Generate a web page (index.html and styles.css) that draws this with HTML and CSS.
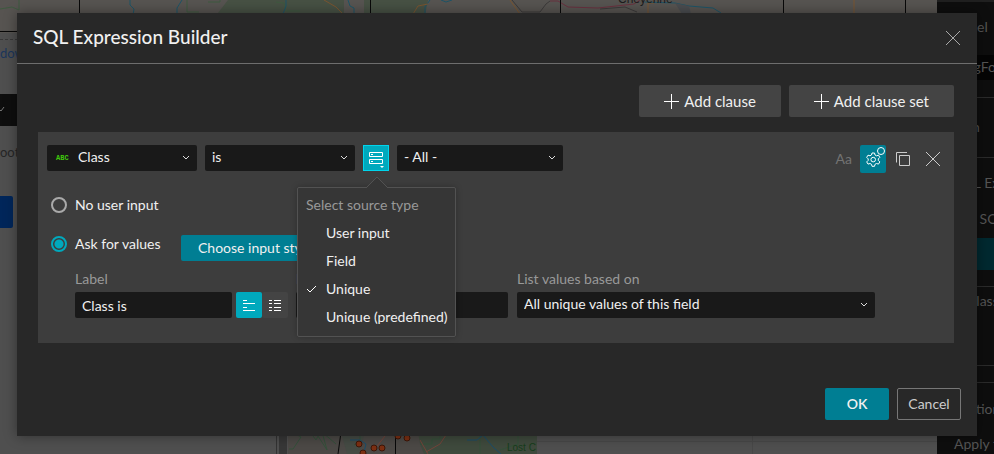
FILE: index.html
```html
<!DOCTYPE html>
<html lang="en">
<head>
    <meta charset="UTF-8">
    <meta name="viewport" content="width=device-width, initial-scale=1.0">
    <title>SQL Expression Builder</title>
    <link rel="stylesheet" href="styles.css">
</head>
<body>
    <div class="app" aria-hidden="true">
        <div class="app-main">
            <svg class="map-top" viewBox="0 0 937 40" preserveAspectRatio="xMinYMin slice">
                <rect width="937" height="40" fill="#575451"/>
                <path d="M218 13 L228 0 H344 V13 Z" fill="#475144"/>
                <path d="M300 0 h12 v10 h14 v6 h-26z M364 0 h64 l-3 16 h-61z" fill="#475144"/>
                <path d="M0 9 L12 7 L19 10 V0 M187 0 v12 h12 M208 2 h12 v-2 M276 2 l8 1 l2 8 h14" fill="none" stroke="#3f5a40" stroke-width="1"/>
                <path d="M130 0 v5 l4 4 l-1 6 M182 0 l-5 8 v6 M286 0 v6 l-3 8 M348 0 l2 6 l4 2 v8 M430 0 l-5 7 v8 M441 0 l5 2 l6 -2" fill="none" stroke="#1d5468" stroke-width="1"/>
                <path d="M324 0 l12 7 l8 8 M413 14 l5 -8 l10 -2 M510 0 l10 14 M648 14 V3 h6 V0 M854 0 v14" fill="none" stroke="#7a5530" stroke-width="1"/>
                <path d="M512 0 l10 12 h18 l6 -8 l4 -3 M600 9 l25 -2 l12 5" fill="none" stroke="#3c3a3a" stroke-width="1"/>
                <path d="M550 1 h8 l10 6 l30 1 l36 -4 l6 -4" fill="none" stroke="#69313f" stroke-width="1"/>
                <path d="M645 2 l30 1 l14 3 l24 2 l8 5" fill="none" stroke="#1d5468" stroke-width="1"/>
                <path d="M675 3 l14 3 l2 8 h-9z" fill="#4b4d50"/>
                <path d="M79.500 0 V40 M370.500 0 V14 M560.500 0 V14 M783.500 0 V14 M905.500 0 V14 M0 31.500 H40" stroke="#080808" stroke-width="1"/>
                <path d="M0 33 H40 V40 H0z" fill="#4f4f4f"/>
                <path d="M0 39.500 H40" stroke="#383838" stroke-dasharray="3 2"/>
                <text x="618" y="3" class="place">Cheyenne</text>
            </svg>
            <div class="side-form">
                <a href="#" class="side-link">dow</a>
                <div class="side-bar">
                    <svg width="10" height="8" viewBox="0 0 10 8"><path d="M0 4 l1 1 l3 -4" fill="none" stroke="#777"/></svg>
                </div>
                <span class="side-text">oot</span>
                <div class="side-button"></div>
            </div>
            <svg class="map-bottom" viewBox="0 0 937 22" preserveAspectRatio="xMinYMin slice">
                <rect width="937" height="22" fill="#4f4f4f"/>
                <rect x="279" width="8" height="22" fill="#373737"/>
                <path d="M276.500 0 V22" stroke="#333"/>
                <rect x="288" width="249" height="22" fill="#4c4946"/>
                <path d="M418 0 H537 V22 H424 L420 12 Z" fill="#3f4a3d"/>
                <path d="M341 0 h24 l-6 22 h-12z" fill="#454b44"/>
                <path d="M289 17 h4 l8 -12 l-4 -2 M310 0 l6 8 l2 -4 l9 14 l-5 -18 l14 12 M360 0 v9 l-6 4 M420 12 h12 v-5 h8 v-7 M480 0 V22 M500 18 l18 -6 l0 -12" fill="none" stroke="#34503a"/>
                <path d="M385 4 l-8 10 M448 0 l-8 12 l-14 8 M420 8 l8 14" fill="none" stroke="#74443a"/>
                <path d="M350 8 h10 l6 4 l-2 8 M467 8 h10 l6 -5 l10 12 l8 7" fill="none" stroke="#1b4d6a"/>
                <path d="M341 0 L338 22 M395.500 0 V22" stroke="#080808"/>
                <path d="M537 9.500 H937 M752.500 0 V22" stroke="#484848"/>
                <g fill="#7c2f12" stroke="#3d1608" stroke-width="1">
                    <circle cx="359" cy="12" r="3"/>
                    <circle cx="374" cy="16" r="3"/>
                    <circle cx="382" cy="16" r="3"/>
                    <circle cx="398" cy="4" r="3"/>
                    <circle cx="407" cy="6" r="3"/>
                    <circle cx="363" cy="21" r="3"/>
                </g>
                <text x="507" y="19" class="park">Lost C</text>
            </svg>
        </div>
        <div class="app-panel">
            <div class="panel-group">Label</div>
            <div class="panel-field">StringFo</div>
            <div class="panel-group panel-mid">Join</div>
            <div class="panel-group panel-sql">SQL Ex</div>
            <div class="panel-group panel-sub">Add SQ</div>
            <div class="panel-accent"></div>
            <div class="panel-group panel-class">Class</div>
            <div class="panel-gap"></div>
            <div class="panel-group panel-action">Action</div>
            <div class="panel-apply">Apply f</div>
        </div>
    </div>

    <form class="dialog" role="dialog" aria-labelledby="dialog-title">
        <header class="dialog-header">
            <h1 id="dialog-title">SQL Expression Builder</h1>
            <button type="button" class="icon-button" aria-label="Close">
                <svg width="14" height="14" viewBox="0 0 14 14"><path d="M0 0 L14 14 M14 0 L0 14" stroke="#a9a9a9"/></svg>
            </button>
        </header>

        <div class="dialog-body">
            <div class="toolbar">
                <button type="button" class="add-button">
                    <svg width="15" height="15" viewBox="0 0 15 15"><path d="M7.500 0 V15 M0 7.500 H15" stroke="#fff"/></svg>
                    Add clause
                </button>
                <button type="button" class="add-button">
                    <svg width="15" height="15" viewBox="0 0 15 15"><path d="M7.500 0 V15 M0 7.500 H15" stroke="#fff"/></svg>
                    Add clause set
                </button>
            </div>

            <section class="clause">
                <div class="clause-row">
                    <div class="select field-select">
                        <span class="field-type">ABC</span>
                        <select aria-label="Field"><option>Class</option></select>
                        <svg class="chevron" width="8" height="6" viewBox="0 0 8 6"><path d="M1 1 L4 4 L7 1"/></svg>
                    </div>
                    <div class="select operator-select">
                        <select aria-label="Operator"><option>is</option></select>
                        <svg class="chevron" width="8" height="6" viewBox="0 0 8 6"><path d="M1 1 L4 4 L7 1"/></svg>
                    </div>
                    <div class="source">
                        <button type="button" class="source-button" aria-label="Select source type">
                            <svg width="24" height="24" viewBox="0 0 24 24">
                                <path d="M5.500 6.500 h13 v4 h-13z M5.500 13.500 h13 v4 h-13z M7 8.500 h2 M7 15.500 h2" fill="none" stroke="#fff"/>
                                <path d="M16 20 h4 l-2 2z" fill="#fff"/>
                            </svg>
                        </button>
                        <div class="source-menu">
                            <svg class="menu-arrow" width="22" height="12" viewBox="0 0 22 12"><path d="M0 12 L11 1 L22 12" fill="#363636" stroke="#525252"/></svg>
                            <h2>Select source type</h2>
                            <button type="button" class="menu-item">User input</button>
                            <button type="button" class="menu-item">Field</button>
                            <button type="button" class="menu-item">
                                <svg class="check" width="11" height="8" viewBox="0 0 11 8"><path d="M1 4 L4 7 L10 1" fill="none" stroke="#fff"/></svg>
                                Unique
                            </button>
                            <button type="button" class="menu-item">Unique (predefined)</button>
                        </div>
                    </div>
                    <div class="select value-select">
                        <select aria-label="Value"><option>- All -</option></select>
                        <svg class="chevron" width="8" height="6" viewBox="0 0 8 6"><path d="M1 1 L4 4 L7 1"/></svg>
                    </div>
                    <div class="clause-actions">
                        <button type="button" class="case-button">Aa</button>
                        <button type="button" class="gear-button" aria-label="Settings">
                            <svg width="26" height="28" viewBox="0 0 26 28" fill="none" stroke="#fff">
                                <path d="M12 8 h2.500 l.5 2 l1.500 .8 l2 -.6 l1.300 2.200 l-1.500 1.500 v1.500 l1.500 1.500 l-1.300 2.200 l-2 -.6 l-1.500 .8 l-.5 2 h-2.500 l-.5 -2 l-1.500 -.8 l-2 .6 l-1.300 -2.200 l1.500 -1.500 v-1.500 l-1.500 -1.500 l1.300 -2.200 l2 .6 l1.500 -.8z"/>
                                <circle cx="13.200" cy="14.600" r="2.300"/>
                                <circle cx="21" cy="6" r="3.500" fill="#007e93"/>
                            </svg>
                        </button>
                        <button type="button" class="icon-button" aria-label="Duplicate">
                            <svg width="14" height="14" viewBox="0 0 14 14"><path d="M3.500 3.500 h10 v10 h-10z M.5 10.500 V.5 H11" fill="none" stroke="#ccc"/></svg>
                        </button>
                        <button type="button" class="icon-button" aria-label="Delete">
                            <svg width="14" height="14" viewBox="0 0 14 14"><path d="M0 0 L14 14 M14 0 L0 14" stroke="#ccc"/></svg>
                        </button>
                    </div>
                </div>

                <div class="choice-row">
                    <label class="choice"><input type="radio" name="ask">No user input</label>
                </div>
                <div class="choice-row ask-row">
                    <label class="choice"><input type="radio" name="ask" checked>Ask for values</label>
                    <button type="button" class="style-button">Choose input style</button>
                </div>

                <div class="ask-fields">
                    <div class="ask-field label-field">
                        <label for="label">Label</label>
                        <div class="label-row">
                            <input type="text" id="label" value="Class is">
                            <div class="layout-toggle">
                                <button type="button" class="active" aria-label="Stacked layout">
                                    <svg width="12" height="11" viewBox="0 0 12 11"><path d="M0 .5 H4 M0 3.500 H12 M0 7.500 H4 M0 10.500 H12" stroke="#fff"/></svg>
                                </button>
                                <button type="button" aria-label="Inline layout">
                                    <svg width="12" height="11" viewBox="0 0 12 11"><path d="M0 .5 H3 M5 .5 H12 M0 3.500 H3 M5 3.500 H12 M0 7.500 H3 M5 7.500 H12 M0 10.500 H3 M5 10.500 H12" stroke="#fff"/></svg>
                                </button>
                            </div>
                        </div>
                    </div>
                    <div class="ask-field hint-field">
                        <label for="hint">Hint</label>
                        <input type="text" id="hint">
                    </div>
                    <div class="ask-field list-field">
                        <label for="list">List values based on</label>
                        <div class="select">
                            <select id="list"><option>All unique values of this field</option></select>
                            <svg class="chevron" width="8" height="6" viewBox="0 0 8 6"><path d="M1 1 L4 4 L7 1"/></svg>
                        </div>
                    </div>
                </div>
            </section>
        </div>

        <footer class="dialog-footer">
            <button type="submit" class="ok-button">OK</button>
            <button type="button" class="cancel-button">Cancel</button>
        </footer>
    </form>
</body>
</html>
```

FILE: styles.css
```css
* {
    box-sizing: border-box;
    margin: 0;
    padding: 0;
}

body {
    font-family: Lato, "Noto Sans", sans-serif;
    font-size: 14px;
    line-height: 18px;
    color: #f0f0f0;
    background: #4f4f4f;
    overflow: hidden;
}

button,
input,
select {
    font: inherit;
    color: inherit;
    border: none;
    border-radius: 2px;
}

button {
    cursor: pointer;
}

svg {
    display: block;
    flex-shrink: 0;
}

/* Dimmed application behind the dialog */
.app {
    position: absolute;
    inset: 0;
    display: flex;
    overflow: hidden;
}

.app-main {
    flex: 1;
    min-width: 0;
    display: flex;
    flex-direction: column;
    background: #4f4f4f;
}

.map-top {
    width: 100%;
    height: 40px;
}

.map-bottom {
    width: 100%;
    height: 22px;
    margin-top: auto;
}

.place {
    font: 12px "Liberation Sans", sans-serif;
    fill: #1c1c1c;
}

.park {
    font: 10px "Liberation Sans", sans-serif;
    fill: #173d1b;
}

.side-form {
    width: 17px;
    display: flex;
    flex-direction: column;
    align-items: flex-start;
}

.side-link {
    margin-top: 4px;
    font-size: 13px;
    text-decoration: none;
    color: #1b365c;
}

.side-bar {
    width: 100%;
    height: 32px;
    margin-top: 32px;
    padding-top: 12px;
    background: #0e0e0e;
}

.side-text {
    margin-top: 17px;
    font-size: 13px;
    color: #262626;
}

.side-button {
    width: 13px;
    height: 32px;
    margin-top: 35px;
    border-radius: 0 2px 2px 0;
    background: #00265a;
}

.app-panel {
    width: 57px;
    overflow: hidden;
    white-space: nowrap;
    color: #555;
    background: #0e0e0e;
    border-top: 2px solid #202020;
}

.panel-group {
    padding-left: 18px;
    border-bottom: 1px solid #2b2b2b;
}

.panel-group:first-child {
    height: 53px;
    padding-top: 16px;
    border: none;
}

.panel-field {
    height: 25px;
    margin-bottom: 17px;
    padding: 3px 0 0 8px;
    background: #050505;
}

.panel-mid {
    height: 61px;
    padding-top: 20px;
    border-top: 1px solid #2b2b2b;
}

.panel-sql {
    height: 43px;
    padding-top: 16px;
    border: none;
}

.panel-sub {
    height: 37px;
    padding: 9px 0 0 14px;
    border: none;
}

.panel-accent {
    height: 32px;
    background: #002930;
}

.panel-class {
    height: 80px;
    margin-top: 16px;
    padding: 5px 0 0 30px;
    border-top: 1px solid #2b2b2b;
}

.panel-gap {
    height: 17px;
    border-bottom: 1px solid #2b2b2b;
}

.panel-action {
    height: 52px;
    padding: 17px 0 0 23px;
    border: none;
}

.panel-apply {
    padding-left: 17px;
}

/* Dialog */
.dialog {
    position: relative;
    margin: 13px 17px 18px;
    background: #282828;
    box-shadow: 0 0 12px rgba(0, 0, 0, 0.4);
}

.dialog-header {
    display: flex;
    align-items: center;
    justify-content: space-between;
    height: 51px;
    padding: 0 17px 0 16px;
    border-bottom: 1px solid #6e6e6e;
}

.dialog-header h1 {
    padding-bottom: 2px;
    font-size: 19px;
    font-weight: 500;
    line-height: 24px;
}

.icon-button {
    background: none;
}

.dialog-body {
    padding: 21px 23px 0 21px;
}

.toolbar {
    display: flex;
    justify-content: flex-end;
    gap: 8px;
}

.add-button {
    display: flex;
    align-items: center;
    gap: 5px;
    height: 32px;
    padding: 0 25px;
    font-size: 15px;
    background: #444;
}

.clause {
    margin-top: 15px;
    padding: 13px 14px 25px 9px;
    background: #3d3d3d;
}

.clause-row {
    display: flex;
    align-items: flex-start;
    gap: 8px;
}

.select {
    display: flex;
    align-items: center;
    position: relative;
    height: 26px;
    border-radius: 2px;
    background: #191919;
}

.select select {
    appearance: none;
    flex: 1;
    min-width: 0;
    height: 26px;
    padding: 0 24px 2px 7px;
    background: none;
}

.chevron {
    position: absolute;
    right: 7px;
    fill: none;
    stroke: #ddd;
    pointer-events: none;
}

.field-select,
.operator-select {
    width: 150px;
}

.value-select {
    width: 166px;
}

.field-type {
    padding-left: 9px;
    width: 24px;
    font: bold 7px "Liberation Mono", monospace;
    color: #3fc90c;
}

.source {
    position: relative;
}

.source-button {
    display: block;
    width: 26px;
    height: 26px;
    border: 1px solid #00d5ec;
    border-radius: 0;
    background: #00a9bd;
}

.source-menu {
    position: absolute;
    z-index: 1;
    top: 42px;
    left: -66px;
    width: 159px;
    padding: 8px 0 5px;
    white-space: nowrap;
    border: 1px solid #525252;
    border-radius: 2px;
    background: #363636;
    box-shadow: 0 0 6px rgba(0, 0, 0, 0.25);
}

.menu-arrow {
    position: absolute;
    top: -12px;
    left: 68px;
}

.source-menu h2 {
    padding: 0 8px;
    margin-bottom: 5px;
    font-size: 14px;
    font-weight: normal;
    color: #999;
}

.menu-item {
    display: flex;
    align-items: center;
    width: 100%;
    height: 28px;
    padding-left: 28px;
    background: none;
}

.check {
    margin: 0 9px 0 -20px;
}

.clause-actions {
    display: flex;
    align-items: center;
    margin-left: auto;
}

.case-button {
    margin-right: 8px;
    color: #737373;
    background: none;
}

.gear-button {
    height: 28px;
    background: #007e93;
}

.clause-actions .icon-button {
    margin-left: 10px;
}

.clause-actions .icon-button + .icon-button {
    margin-left: 16px;
}

.choice-row {
    display: flex;
    height: 26px;
    margin-top: 19px;
    padding-left: 4px;
}

.choice {
    display: flex;
    align-items: center;
    gap: 8px;
    width: 130px;
}

.choice input {
    appearance: none;
    width: 16px;
    height: 16px;
    border: 2px solid #aaa;
    border-radius: 50%;
}

.choice input:checked {
    border-color: #00a9bd;
    background: radial-gradient(circle, #00a9bd 4px, transparent 5px);
}

.ask-row {
    height: 30px;
    margin-top: 13px;
    padding-bottom: 4px;
}

.style-button {
    height: 26px;
    margin-top: 4px;
    padding: 0 17px;
    background: #007e93;
}

.ask-fields {
    display: flex;
    margin-top: 9px;
    padding-left: 28px;
}

.ask-field label {
    display: block;
    margin-bottom: 4px;
    color: #999;
}

.ask-field input {
    height: 26px;
    width: 100%;
    padding: 0 7px;
    background: #191919;
}

.label-field {
    width: 213px;
}

.label-row {
    display: flex;
    gap: 4px;
}

.layout-toggle {
    display: flex;
}

.layout-toggle button {
    display: flex;
    align-items: center;
    justify-content: center;
    width: 26px;
    height: 26px;
    background: #444;
}

.layout-toggle .active {
    background: #00a9bd;
}

.hint-field {
    width: 212px;
    margin: 0 9px 0 8px;
}

.list-field {
    width: 358px;
}

.dialog-footer {
    display: flex;
    justify-content: flex-end;
    gap: 8px;
    padding: 45px 16px 16px;
}

.dialog-footer button {
    width: 64px;
    height: 32px;
}

.ok-button {
    font-weight: 600;
    background: #007e93;
}

.cancel-button {
    color: #ccc;
    background: none;
    border: 1px solid #777;
}
```
